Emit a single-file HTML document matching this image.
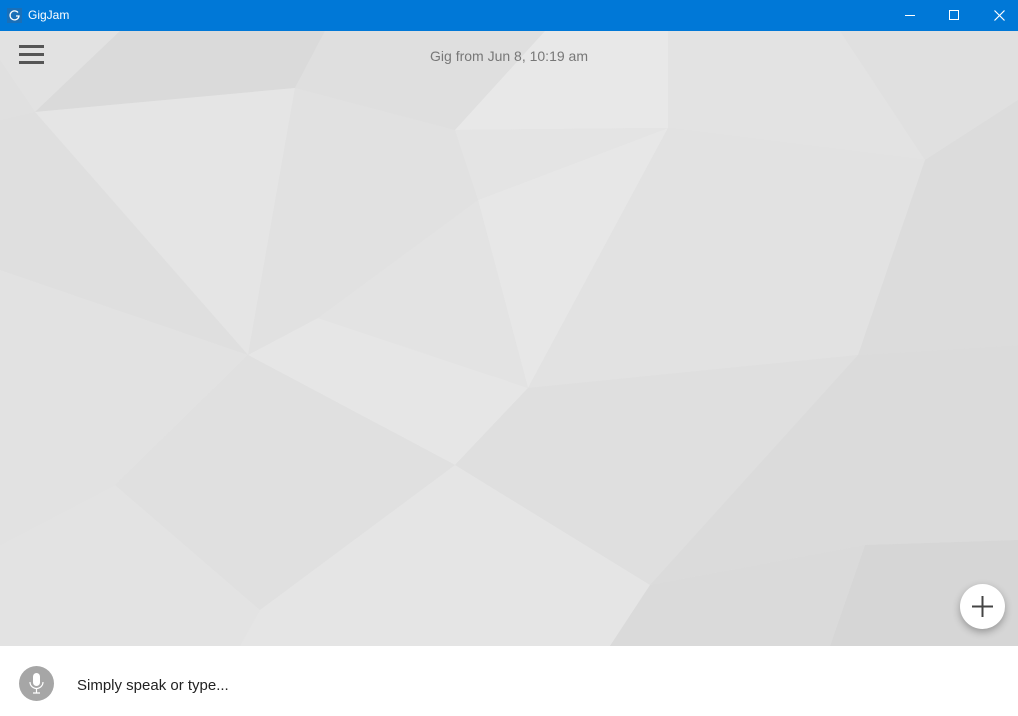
<!DOCTYPE html>
<html><head><style>
*{margin:0;padding:0;box-sizing:border-box}
body{width:1018px;height:716px;overflow:hidden;font-family:"Liberation Sans",sans-serif;background:#fff;position:relative}
#tb{position:absolute;left:0;top:0;width:1018px;height:31px;background:#0078d7;color:#fff;font-size:12px}
#bg{position:absolute;left:0;top:31px;width:1018px;height:615px}
#bot{position:absolute;left:0;top:646px;width:1018px;height:70px;background:#fff}
</style></head><body>
<div id="tb">
<div style="position:absolute;left:7px;top:8px;width:15px;height:15px;background:#1a6fb8"></div>
<svg style="position:absolute;left:7px;top:8px" width="15" height="15"><path d="M11 4.5 A4.5 4.5 0 1 0 12 8 L9 8" fill="none" stroke="#fff" stroke-width="1.3"/></svg>
<span style="position:absolute;left:28px;top:8px">GigJam</span>
<div style="position:absolute;left:905px;top:15px;width:10px;height:1px;background:#fff"></div>
<div style="position:absolute;left:949px;top:10px;width:10px;height:10px;border:1px solid #fff"></div>
<svg style="position:absolute;left:994px;top:10px" width="11" height="11"><path d="M0.5 0.5L10.5 10.5M10.5 0.5L0.5 10.5" stroke="#fff" stroke-width="1.2"/></svg>
</div>
<svg id="bg" width="1018" height="615" viewBox="0 31 1018 615">
<rect x="0" y="31" width="1018" height="615" fill="#e0e0e0"/>
<polygon points="0,31 120,31 35,112 0,60" fill="#e2e2e2"/>
<polygon points="120,31 325,31 295,88 35,112" fill="#dadada"/>
<polygon points="325,31 545,31 455,130 295,88" fill="#dfdfdf"/>
<polygon points="545,31 668,31 668,128 455,130" fill="#e8e8e8"/>
<polygon points="668,31 840,31 925,160 668,128" fill="#e3e3e3"/>
<polygon points="840,31 1018,31 1018,100 925,160" fill="#e0e0e0"/>
<polygon points="35,112 295,88 248,355" fill="#e5e5e5"/>
<polygon points="295,88 455,130 478,200 318,318 248,355" fill="#e1e1e1"/>
<polygon points="455,130 668,128 478,200" fill="#e4e4e4"/>
<polygon points="478,200 668,128 528,388" fill="#e7e7e7"/>
<polygon points="478,200 318,318 528,388" fill="#e3e3e3"/>
<polygon points="668,128 925,160 858,355 528,388" fill="#e2e2e2"/>
<polygon points="925,160 1018,100 1018,345 858,355" fill="#dcdcdc"/>
<polygon points="0,120 35,112 248,355 0,270" fill="#dfdfdf"/>
<polygon points="0,270 248,355 115,485 0,545" fill="#e2e2e2"/>
<polygon points="248,355 318,318 528,388 455,465" fill="#e6e6e6"/>
<polygon points="248,355 455,465 260,610 115,485" fill="#e0e0e0"/>
<polygon points="528,388 858,355 650,585 455,465" fill="#dfdfdf"/>
<polygon points="858,355 1018,345 1018,540 865,545 650,585" fill="#dbdbdb"/>
<polygon points="0,545 115,485 260,610 240,646 0,646" fill="#e3e3e3"/>
<polygon points="260,610 455,465 650,585 610,646 240,646" fill="#e5e5e5"/>
<polygon points="650,585 865,545 830,646 610,646" fill="#dadada"/>
<polygon points="865,545 1018,540 1018,646 830,646" fill="#d6d6d6"/>
</svg>
<div style="position:absolute;left:19px;top:45px;width:25px;height:3px;background:#555;box-shadow:0 8px 0 #555,0 16px 0 #555"></div>
<div style="position:absolute;left:0;width:1018px;top:48px;text-align:center;font-size:14px;color:#777;padding-left:0">Gig from Jun 8, 10:19 am</div>
<div style="position:absolute;left:960px;top:584px;width:45px;height:45px;border-radius:50%;background:#fff;box-shadow:0 3px 8px rgba(0,0,0,.3)"></div>
<svg style="position:absolute;left:970px;top:594px" width="25" height="25"><path d="M12.5 2V23M2 12.5H23" stroke="#444" stroke-width="2"/></svg>
<div id="bot">
<div style="position:absolute;left:19px;top:20px;width:35px;height:35px;border-radius:50%;background:#a6a6a6"></div>
<svg style="position:absolute;left:19px;top:20px" width="35" height="35"><rect x="14" y="7" width="7" height="13" rx="3.5" fill="#fff"/><path d="M11 16a6.5 6.5 0 0 0 13 0M17.5 22.5V27M14 27h7" fill="none" stroke="#fff" stroke-width="1.2"/></svg>
<span style="position:absolute;left:77px;top:31px;font-size:15px;color:#222">Simply speak or type...</span>
</div>
</body></html>
